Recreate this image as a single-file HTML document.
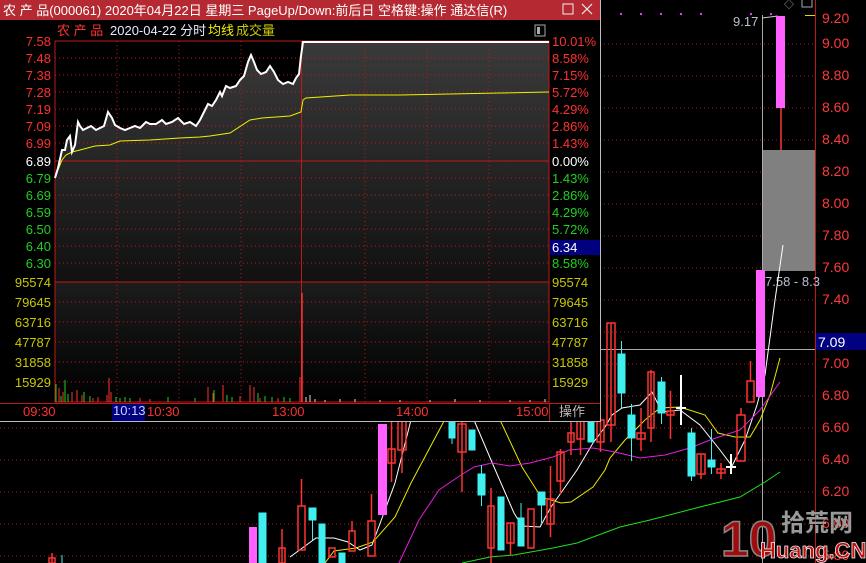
<!DOCTYPE html>
<html><head><meta charset="utf-8"><style>
html,body{margin:0;padding:0;background:#000;width:866px;height:563px;overflow:hidden}
svg{display:block;font-family:"Liberation Sans","Noto Sans CJK SC",sans-serif;font-size:12px}
</style></head><body>
<svg width="866" height="563" viewBox="0 0 866 563" xmlns="http://www.w3.org/2000/svg">
<defs>
<linearGradient id="pg" x1="0" y1="41" x2="0" y2="282" gradientUnits="userSpaceOnUse">
<stop offset="0" stop-color="#3a3a3a"/><stop offset="1" stop-color="#111"/></linearGradient>
<linearGradient id="vg" x1="0" y1="282" x2="0" y2="402" gradientUnits="userSpaceOnUse">
<stop offset="0" stop-color="#1c1c1c"/><stop offset="1" stop-color="#000"/></linearGradient>
</defs>
<rect width="866" height="563" fill="#000"/>

<g stroke="#b01818" stroke-dasharray="1,3" stroke-width="1">
<line x1="0" y1="44" x2="815" y2="44"/><line x1="0" y1="76" x2="815" y2="76"/><line x1="0" y1="108" x2="815" y2="108"/>
<line x1="0" y1="140" x2="815" y2="140"/><line x1="0" y1="172" x2="815" y2="172"/><line x1="0" y1="204" x2="815" y2="204"/>
<line x1="0" y1="236" x2="815" y2="236"/><line x1="0" y1="268" x2="815" y2="268"/><line x1="0" y1="300" x2="815" y2="300"/>
<line x1="0" y1="332" x2="815" y2="332"/><line x1="0" y1="364" x2="815" y2="364"/><line x1="0" y1="396" x2="815" y2="396"/>
<line x1="0" y1="428" x2="815" y2="428"/><line x1="0" y1="460" x2="815" y2="460"/><line x1="0" y1="492" x2="815" y2="492"/>
<line x1="0" y1="524" x2="815" y2="524"/><line x1="0" y1="556" x2="815" y2="556"/>
</g>
<line x1="815.5" y1="0" x2="815.5" y2="563" stroke="#c01818"/>
<g fill="#ff3a3a" font-size="14">
<text x="822" y="23">9.20</text><text x="822" y="48">9.00</text><text x="822" y="80">8.80</text><text x="822" y="112">8.60</text>
<text x="822" y="144">8.40</text><text x="822" y="176">8.20</text><text x="822" y="208">8.00</text><text x="822" y="240">7.80</text>
<text x="822" y="272">7.60</text><text x="822" y="304">7.40</text><text x="822" y="368">7.00</text>
<text x="822" y="400">6.80</text><text x="822" y="432">6.60</text><text x="822" y="464">6.40</text><text x="822" y="496">6.20</text>
<text x="822" y="528">6.00</text><text x="822" y="560">5.80</text>
</g>
<rect x="816" y="333" width="50" height="17" fill="#000080"/>
<text x="818" y="347" fill="#fff" font-size="14">7.09</text>
<line x1="600" y1="349.5" x2="815" y2="349.5" stroke="#aaa"/>
<line x1="762.5" y1="15" x2="762.5" y2="563" stroke="#aaa"/>
<g fill="#e040e0"><rect x="620" y="13" width="2" height="2"/><rect x="640" y="13" width="2" height="2"/><rect x="660" y="13" width="2" height="2"/><rect x="680" y="13" width="2" height="2"/><rect x="700" y="13" width="2" height="2"/><rect x="750" y="13" width="2" height="2"/><rect x="770" y="13" width="2" height="2"/></g>
<text x="733" y="26" fill="#b8c0d0" font-size="13">9.17</text>
<path d="M762 18 L778 16" stroke="#ccc" fill="none"/>
<text x="784" y="8" fill="#aaa" font-size="10">◇</text>
<rect x="802" y="-2" width="10" height="9" fill="none" stroke="#aaa"/>
<line x1="805" y1="15.5" x2="815" y2="15.5" stroke="#e0e000"/>

<rect x="763" y="150" width="52" height="121" fill="#808080"/>
<text x="765" y="286" fill="#b8c0d0" font-size="13">7.58 - 8.3</text>

<polyline fill="none" stroke="#fff" stroke-width="1" points="290,557 316,538 334,538 348,542 360,550 372,545 385,510 395,483 411,420 474,420 494,467 514,513 522,526 540,527 551,507 563,490 577,470 593,443 605,427 612,415 622,408 640,405 652,392 662,412 680,410 700,425 720,450 732,466 745,440 757,405 765,375 775,300 783,245"/>
<polyline fill="none" stroke="#e8e800" stroke-width="1" points="325,563 334,551 356,548 373,542 395,517 411,483 427,453 443,423 450,405 500,420 522,467 541,497 561,503 571,502 593,487 605,470 610,458 625,440 645,420 660,408 680,407 705,415 718,433 735,437 750,437 760,420 770,395 780,358"/>
<polyline fill="none" stroke="#e020e0" stroke-width="1" points="399,563 419,520 439,490 458,477 474,467 492,463 510,466 530,463 553,457 569,450 593,448 615,452 640,458 665,455 690,448 710,440 740,430 760,410 780,382"/>
<polyline fill="none" stroke="#20e020" stroke-width="1" points="462,563 490,557 514,555 553,548 577,543 620,527 650,520 700,507 740,497 765,482 780,472"/>

<g stroke="#ff3333" stroke-width="1.5" fill="none">
<line x1="282" y1="529" x2="282" y2="563"/><rect x="279" y="548" width="6" height="15"/>
<line x1="301.5" y1="479" x2="301.5" y2="506"/><rect x="298" y="506" width="7" height="44"/>
<rect x="329" y="548" width="6" height="9"/>
<line x1="352" y1="521" x2="352" y2="531"/><rect x="349" y="531" width="6" height="20"/>
<line x1="371.5" y1="494" x2="371.5" y2="521"/><rect x="368" y="521" width="7" height="35"/>
<line x1="391.5" y1="420" x2="391.5" y2="482"/><rect x="388" y="449" width="7" height="14"/>
<line x1="402" y1="420" x2="402" y2="473"/><rect x="398" y="420" width="8" height="30"/>
<line x1="462" y1="420" x2="462" y2="492"/><rect x="458" y="424" width="8" height="28"/>
<line x1="491" y1="488" x2="491" y2="563"/><rect x="488" y="506" width="6" height="42"/>
<line x1="510.5" y1="523" x2="510.5" y2="555"/><rect x="507" y="523" width="7" height="20"/>
<rect x="528" y="509" width="6" height="39"/>
<line x1="550.5" y1="466" x2="550.5" y2="537"/><rect x="547" y="499" width="7" height="25"/>
<line x1="560.5" y1="449" x2="560.5" y2="494"/><rect x="557" y="452" width="7" height="29"/>
<line x1="571" y1="420" x2="571" y2="455"/><rect x="568" y="433" width="6" height="9"/>
<line x1="580.5" y1="420" x2="580.5" y2="455"/><rect x="577" y="420" width="7" height="19"/>
<line x1="600.5" y1="420" x2="600.5" y2="452"/><rect x="597" y="420" width="7" height="22"/>
<line x1="611" y1="323" x2="611" y2="442"/><rect x="607" y="323" width="8" height="102"/>
<line x1="641" y1="408" x2="641" y2="451"/><rect x="637" y="433" width="8" height="6"/>
<line x1="651" y1="370" x2="651" y2="442"/><rect x="648" y="372" width="6" height="56"/>
<line x1="670.5" y1="391" x2="670.5" y2="439"/><rect x="667" y="411" width="7" height="4"/>
<line x1="701" y1="454" x2="701" y2="479"/><rect x="697" y="454" width="8" height="20"/>
<line x1="721" y1="463" x2="721" y2="479"/><rect x="717" y="469" width="8" height="4"/>
<line x1="741" y1="408" x2="741" y2="415"/><rect x="737" y="415" width="8" height="46"/>
<line x1="750.5" y1="361" x2="750.5" y2="381"/><rect x="747" y="381" width="7" height="21"/>
<line x1="781" y1="108" x2="781" y2="150"/>
<line x1="52" y1="553" x2="52" y2="563"/><rect x="49" y="558" width="6" height="5"/>
</g>
<g fill="#40f0f0" stroke="#40f0f0">
<rect x="259" y="513" width="7" height="50"/>
<line x1="312.5" y1="520" x2="312.5" y2="540"/><rect x="309" y="508" width="7" height="12"/>
<rect x="319" y="524" width="6" height="39"/>
<rect x="339" y="553" width="6" height="10"/>
<line x1="452" y1="420" x2="452" y2="444"/><rect x="449" y="420" width="6" height="18"/>
<rect x="469" y="430" width="6" height="20"/>
<line x1="481.5" y1="465" x2="481.5" y2="506"/><rect x="478" y="474" width="7" height="21"/>
<rect x="498" y="497" width="6" height="53"/>
<line x1="521" y1="503" x2="521" y2="546"/><rect x="518" y="518" width="6" height="28"/>
<line x1="541.5" y1="492" x2="541.5" y2="523"/><rect x="538" y="492" width="7" height="13"/>
<rect x="588" y="420" width="6" height="22"/>
<line x1="621.5" y1="341" x2="621.5" y2="408"/><rect x="618" y="354" width="7" height="39"/>
<line x1="631.5" y1="404" x2="631.5" y2="461"/><rect x="628" y="415" width="7" height="23"/>
<line x1="661.5" y1="377" x2="661.5" y2="424"/><rect x="658" y="382" width="7" height="31"/>
<line x1="691.5" y1="428" x2="691.5" y2="481"/><rect x="688" y="433" width="7" height="43"/>
<line x1="711.5" y1="429" x2="711.5" y2="474"/><rect x="708" y="460" width="7" height="7"/>
<line x1="62" y1="555" x2="62" y2="563"/>
</g>
<g stroke="#fff" stroke-width="2">
<line x1="681" y1="375" x2="681" y2="425"/><line x1="676" y1="408" x2="686" y2="408"/>
<line x1="731" y1="454" x2="731" y2="474"/><line x1="726" y1="467" x2="736" y2="467"/>
</g>
<g fill="#ff60ff">
<rect x="249" y="527" width="8" height="36"/>
<rect x="378" y="424" width="9" height="91"/>
<rect x="756" y="270" width="9" height="127"/>
<rect x="776" y="16" width="9" height="92"/>
</g>

<text x="721" y="556" fill="#a00c0c" font-size="50" font-weight="bold" stroke="#888" stroke-width="1.5">10</text>
<text x="781" y="531" fill="#999" font-size="24" font-weight="bold">拾荒网</text>
<text x="760" y="558" fill="#c01010" font-size="22" font-weight="bold" stroke="#eee" stroke-width="0.8">Huang.CN</text>

<!-- POPUP -->
<rect x="0" y="0" width="600" height="421" fill="#000"/>
<rect x="0" y="0" width="600" height="20" fill="#b52a32"/>
<text x="3" y="15" fill="#fff" font-size="13">农 产 品(000061) 2020年04月22日 星期三 PageUp/Down:前后日 空格键:操作 通达信(R)</text>
<rect x="563" y="4" width="10" height="10" fill="none" stroke="#eee"/>
<path d="M582 4 L592 14 M592 4 L582 14" stroke="#eee" stroke-width="1.2"/>
<text x="57" y="35" fill="#ff3030" font-size="13">农 产 品</text>
<text x="110" y="35" fill="#e8e8ff" font-size="13">2020-04-22 分时</text>
<text x="208" y="35" fill="#f0f000" font-size="13">均线</text>
<text x="236" y="35" fill="#c8c800" font-size="13">成交量</text>
<rect x="535" y="25" width="10" height="11" fill="none" stroke="#aaa"/><rect x="537" y="27" width="3" height="7" fill="#aaa"/>

<rect x="55" y="282" width="494" height="120" fill="url(#vg)"/>
<polygon fill="url(#pg)" points="55,178 58,168 62,150 65,150 67,140 70,136 72,152 75,145 78,122 80,126 83,130 87,128 91,126 96,130 100,128 104,126 108,112 112,118 115,125 120,128 125,130 130,128 135,126 140,128 146,122 150,124 156,124 162,120 166,124 172,122 178,118 184,124 190,122 196,126 200,120 205,110 208,104 212,106 216,100 220,92 222,96 226,86 230,88 236,86 240,80 244,76 248,62 251,55 254,62 257,70 261,74 266,72 270,66 274,72 278,80 283,84 288,82 293,84 296,78 299,74 301,56 303,42 549,42 549,282 55,282"/>
<g stroke="#c01818" stroke-dasharray="1,3">
<line x1="55" y1="58" x2="549" y2="58"/><line x1="55" y1="75" x2="549" y2="75"/><line x1="55" y1="92" x2="549" y2="92"/><line x1="55" y1="109" x2="549" y2="109"/><line x1="55" y1="126" x2="549" y2="126"/><line x1="55" y1="143" x2="549" y2="143"/>
<line x1="55" y1="178" x2="549" y2="178"/><line x1="55" y1="195" x2="549" y2="195"/><line x1="55" y1="212" x2="549" y2="212"/><line x1="55" y1="229" x2="549" y2="229"/><line x1="55" y1="246" x2="549" y2="246"/><line x1="55" y1="263" x2="549" y2="263"/>
<line x1="55" y1="302" x2="549" y2="302"/><line x1="55" y1="322" x2="549" y2="322"/><line x1="55" y1="342" x2="549" y2="342"/><line x1="55" y1="362" x2="549" y2="362"/><line x1="55" y1="382" x2="549" y2="382"/>
<line x1="117" y1="41" x2="117" y2="402"/><line x1="179" y1="41" x2="179" y2="402"/><line x1="241" y1="41" x2="241" y2="402"/><line x1="365" y1="41" x2="365" y2="402"/><line x1="427" y1="41" x2="427" y2="402"/><line x1="489" y1="41" x2="489" y2="402"/>
</g>
<g stroke="#c01818" fill="none">
<rect x="55" y="41" width="494" height="361"/>
<line x1="55" y1="161" x2="549" y2="161"/>
<line x1="55" y1="282" x2="549" y2="282"/>
<line x1="301.5" y1="41" x2="301.5" y2="402"/>
<line x1="0" y1="403.5" x2="600" y2="403.5"/>
<line x1="549.5" y1="403" x2="549.5" y2="421"/>
</g>
<polyline fill="none" stroke="#f0f000" stroke-width="1" points="55,178 58,170 62,160 66,155 72,152 80,150 95,146 110,145 120,141 150,140 180,138 200,137 210,136 230,133 250,120 262,118 290,116 301,112 303,100 306,98 350,95 400,95 450,94 500,93 549,92"/>
<polyline fill="none" stroke="#fff" stroke-width="2" points="55,178 58,168 62,150 65,150 67,140 70,136 72,152 75,145 78,122 80,126 83,130 87,128 91,126 96,130 100,128 104,126 108,112 112,118 115,125 120,128 125,130 130,128 135,126 140,128 146,122 150,124 156,124 162,120 166,124 172,122 178,118 184,124 190,122 196,126 200,120 205,110 208,104 212,106 216,100 220,92 222,96 226,86 230,88 236,86 240,80 244,76 248,62 251,55 254,62 257,70 261,74 266,72 270,66 274,72 278,80 283,84 288,82 293,84 296,78 299,74 301,56 303,42 549,42"/>
<g stroke="#ff3030" stroke-width="1">
<line x1="59" y1="388" x2="59" y2="402"/><line x1="63" y1="392" x2="63" y2="402"/><line x1="72" y1="392" x2="72" y2="402"/><line x1="77" y1="390" x2="77" y2="402"/><line x1="82" y1="395" x2="82" y2="402"/><line x1="93" y1="398" x2="93" y2="402"/><line x1="98" y1="397" x2="98" y2="402"/><line x1="107" y1="395" x2="107" y2="402"/><line x1="109" y1="378" x2="109" y2="402"/><line x1="111" y1="392" x2="111" y2="402"/><line x1="140" y1="398" x2="140" y2="402"/><line x1="150" y1="399" x2="150" y2="402"/><line x1="208" y1="387" x2="208" y2="402"/><line x1="213" y1="393" x2="213" y2="402"/><line x1="223" y1="385" x2="223" y2="402"/><line x1="240" y1="396" x2="240" y2="402"/><line x1="250" y1="385" x2="250" y2="402"/><line x1="254" y1="387" x2="254" y2="402"/><line x1="260" y1="398" x2="260" y2="402"/><line x1="278" y1="398" x2="278" y2="402"/>
<line x1="302" y1="293" x2="302" y2="402" stroke-width="1.5"/><line x1="300" y1="377" x2="300" y2="402"/>
</g>
<g stroke="#20d020" stroke-width="1">
<line x1="56" y1="384" x2="56" y2="402"/><line x1="61" y1="396" x2="61" y2="402"/><line x1="65" y1="380" x2="65" y2="402"/><line x1="68" y1="394" x2="68" y2="402"/><line x1="84" y1="392" x2="84" y2="402"/><line x1="90" y1="396" x2="90" y2="402"/><line x1="116" y1="397" x2="116" y2="402"/><line x1="120" y1="398" x2="120" y2="402"/><line x1="125" y1="397" x2="125" y2="402"/><line x1="130" y1="398" x2="130" y2="402"/><line x1="168" y1="397" x2="168" y2="402"/><line x1="195" y1="398" x2="195" y2="402"/><line x1="214" y1="390" x2="214" y2="402"/><line x1="227" y1="395" x2="227" y2="402"/><line x1="232" y1="397" x2="232" y2="402"/><line x1="258" y1="393" x2="258" y2="402"/><line x1="265" y1="396" x2="265" y2="402"/><line x1="272" y1="397" x2="272" y2="402"/><line x1="284" y1="397" x2="284" y2="402"/><line x1="290" y1="398" x2="290" y2="402"/>
</g>
<g stroke="#ddd" stroke-width="1">
<line x1="306" y1="397" x2="306" y2="402"/><line x1="310" y1="395" x2="310" y2="402"/><line x1="315" y1="399" x2="315" y2="402"/><line x1="325" y1="400" x2="325" y2="402"/><line x1="340" y1="399" x2="340" y2="402"/><line x1="355" y1="399" x2="355" y2="402"/><line x1="380" y1="400" x2="380" y2="402"/><line x1="400" y1="400" x2="400" y2="402"/><line x1="430" y1="400" x2="430" y2="402"/><line x1="455" y1="399" x2="455" y2="402"/><line x1="480" y1="400" x2="480" y2="402"/><line x1="510" y1="400" x2="510" y2="402"/><line x1="530" y1="400" x2="530" y2="402"/><line x1="545" y1="399" x2="545" y2="402"/>
</g>
<g font-size="13" text-anchor="end">
<text x="51" y="46" fill="#ff3030">7.58</text><text x="51" y="63" fill="#ff3030">7.48</text><text x="51" y="80" fill="#ff3030">7.38</text><text x="51" y="97" fill="#ff3030">7.28</text><text x="51" y="114" fill="#ff3030">7.19</text><text x="51" y="131" fill="#ff3030">7.09</text><text x="51" y="148" fill="#ff3030">6.99</text>
<text x="51" y="166" fill="#fff">6.89</text>
<text x="51" y="183" fill="#20d020">6.79</text><text x="51" y="200" fill="#20d020">6.69</text><text x="51" y="217" fill="#20d020">6.59</text><text x="51" y="234" fill="#20d020">6.50</text><text x="51" y="251" fill="#20d020">6.40</text><text x="51" y="268" fill="#20d020">6.30</text>
<text x="51" y="287" fill="#c8c800">95574</text><text x="51" y="307" fill="#c8c800">79645</text><text x="51" y="327" fill="#c8c800">63716</text><text x="51" y="347" fill="#c8c800">47787</text><text x="51" y="367" fill="#c8c800">31858</text><text x="51" y="387" fill="#c8c800">15929</text>
</g>
<g font-size="13">
<text x="552" y="46" fill="#ff3030">10.01%</text><text x="552" y="63" fill="#ff3030">8.58%</text><text x="552" y="80" fill="#ff3030">7.15%</text><text x="552" y="97" fill="#ff3030">5.72%</text><text x="552" y="114" fill="#ff3030">4.29%</text><text x="552" y="131" fill="#ff3030">2.86%</text><text x="552" y="148" fill="#ff3030">1.43%</text>
<text x="552" y="166" fill="#fff">0.00%</text>
<text x="552" y="183" fill="#20d020">1.43%</text><text x="552" y="200" fill="#20d020">2.86%</text><text x="552" y="217" fill="#20d020">4.29%</text><text x="552" y="234" fill="#20d020">5.72%</text>
<rect x="550" y="240" width="50" height="15" fill="#000080"/><text x="552" y="252" fill="#fff">6.34</text>
<text x="552" y="268" fill="#20d020">8.58%</text>
<text x="552" y="287" fill="#c8c800">95574</text><text x="552" y="307" fill="#c8c800">79645</text><text x="552" y="327" fill="#c8c800">63716</text><text x="552" y="347" fill="#c8c800">47787</text><text x="552" y="367" fill="#c8c800">31858</text><text x="552" y="387" fill="#c8c800">15929</text>
</g>
<rect x="112" y="404" width="33" height="17" fill="#000080"/>
<g font-size="13" fill="#ff3030">
<text x="23" y="416">09:30</text><text x="147" y="416">10:30</text><text x="272" y="416">13:00</text><text x="396" y="416">14:00</text><text x="516" y="416">15:00</text>
</g>
<text x="113" y="415" fill="#c8d0ff" font-size="13">10:13</text>
<text x="559" y="416" fill="#bbb" font-size="13">操作</text>
<line x1="0" y1="421.5" x2="601" y2="421.5" stroke="#bbb"/>
<line x1="600.5" y1="0" x2="600.5" y2="422" stroke="#bbb"/>
</svg>
</body></html>
